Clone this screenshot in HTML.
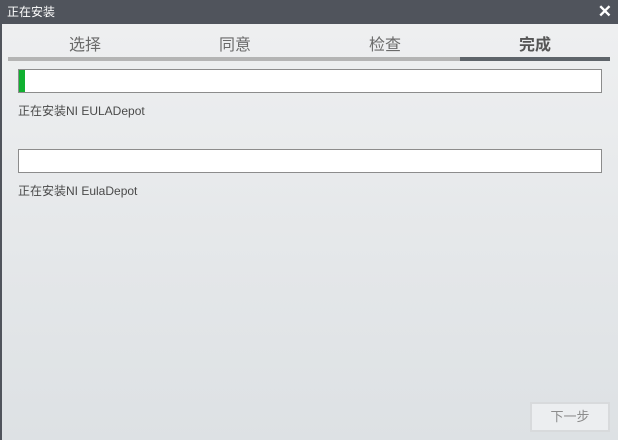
<!DOCTYPE html>
<html><head><meta charset="utf-8"><style>
*{margin:0;padding:0;box-sizing:border-box}
body{width:618px;height:440px;overflow:hidden;position:relative;font-family:"Liberation Sans","Noto Sans CJK SC",sans-serif;background:linear-gradient(#eff0f1,#dde1e4);}
.title{position:absolute;left:0;top:0;width:618px;height:24px;background:#50545c;color:#fff;font-size:12px;line-height:24px;padding-left:7px}
.x{position:absolute;right:6px;top:0;font-size:17px;font-weight:bold;line-height:24px}
.lb{position:absolute;left:0;top:24px;width:2px;height:416px;background:#50545c}
.tab{position:absolute;top:31px;font-size:16px;color:#6a6a6a;width:150px;text-align:center}
.line1{position:absolute;left:8px;top:57px;width:381px;height:4px;background:#b4b4b4}
.line2{position:absolute;left:389px;top:57px;width:221px;height:4px;background:#b4b4b4}
.line3{position:absolute;left:460px;top:57px;width:150px;height:4px;background:#5e646a}
.box{position:absolute;left:18px;width:584px;height:24px;background:#fff;border:1px solid #8c8c8c}
.g{position:absolute;left:0;top:0;width:6px;height:22px;background:#10b030}
.lbl{position:absolute;left:18px;font-size:12px;color:#4a4a4a}
.btn{position:absolute;left:530px;top:402px;width:80px;height:30px;border:2px solid #d8dadc;background:#eceef0;color:#8c8c8c;font-size:13px;text-align:center;line-height:26px}
</style></head><body>
<div class="title">正在安装<span class="x">✕</span></div>
<div class="lb"></div>
<div class="tab" style="left:10px">选择</div>
<div class="tab" style="left:160px">同意</div>
<div class="tab" style="left:310px">检查</div>
<div class="tab" style="left:460px;color:#555;font-weight:bold">完成</div>
<div class="line1"></div><div class="line2"></div><div class="line3"></div>
<div class="box" style="top:69px"><div class="g"></div></div>
<div class="lbl" style="top:102px">正在安装NI EULADepot</div>
<div class="box" style="top:149px"></div>
<div class="lbl" style="top:182px">正在安装NI EulaDepot</div>
<div class="btn">下一步</div>
</body></html>
